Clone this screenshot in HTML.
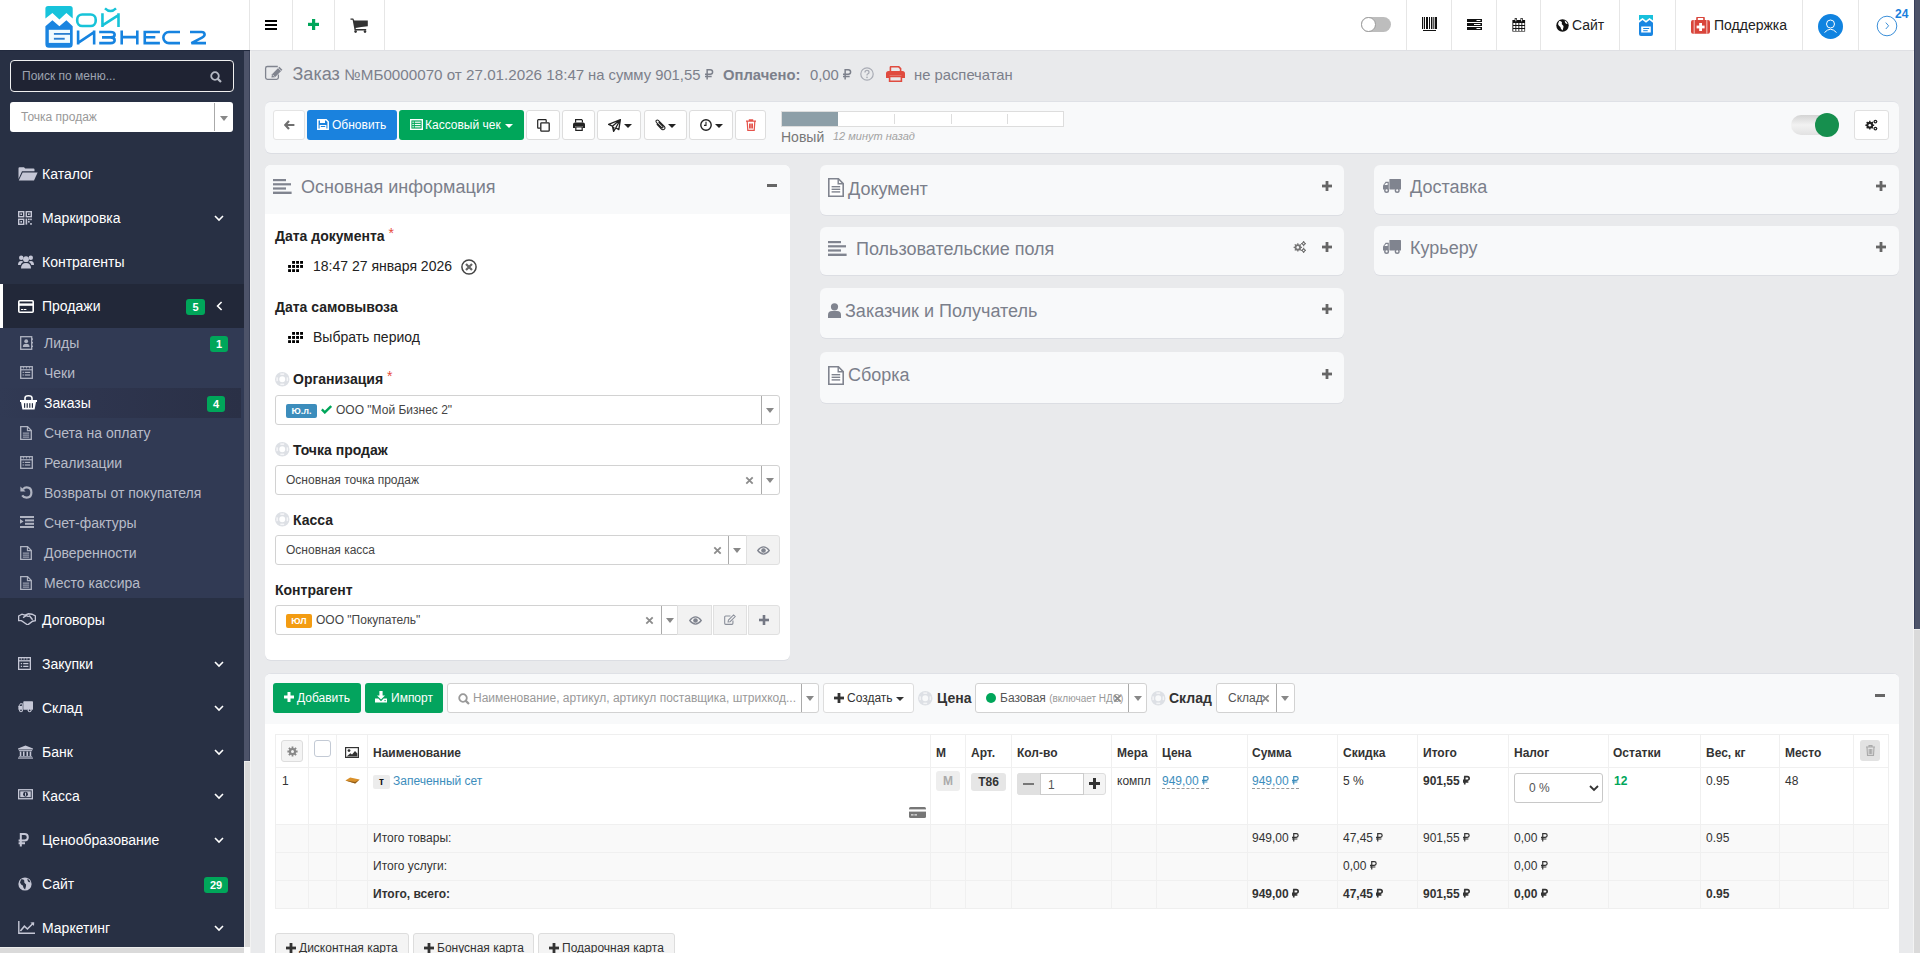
<!DOCTYPE html>
<html><head><meta charset="utf-8">
<style>
*{box-sizing:border-box}
html,body{margin:0;padding:0}
body{width:1920px;height:953px;overflow:hidden;position:relative;background:#e9eaec;font-family:"Liberation Sans",sans-serif;font-size:12px;color:#333}
.abs{position:absolute}
svg{display:block}
.rub{display:inline-block;width:0.6em;height:0.716em;vertical-align:baseline;overflow:visible}.rub path{fill:none;stroke:currentColor;stroke-width:100}.rub.rb path{stroke-width:140}
/* header */
#hdr{position:absolute;left:0;top:0;width:1914px;height:51px;background:#fff;border-bottom:1px solid #dfe0e4}
.vd{position:absolute;top:0;width:1px;height:50px;background:#e6e6e6}
/* sidebar */
#sb{position:absolute;left:0;top:50px;width:244px;height:897px;background:#283044;overflow:hidden}
.mi{position:absolute;left:0;width:244px;height:44px;color:#fff;font-size:14px}
.mi .t{position:absolute;left:42px;top:14px;line-height:16px}
.mi .ic{position:absolute;left:17px;top:14px}
.chev{position:absolute;left:214px;top:19px}
.badge{position:absolute;background:#00a65a;color:#fff;font-weight:bold;font-size:11px;text-align:center;border-radius:3px;line-height:16px;height:16px}
.si{position:absolute;left:0;width:244px;height:30px;color:#b8bcc8;font-size:14px}
.si .t{position:absolute;left:44px;top:7px;line-height:16px}
.si .ic{position:absolute;left:20px;top:8px}
/* scrollbars */
.sbar{position:absolute;background:#dadada}
.thumb{position:absolute;background:#4d5369}
/* content */
.panel{position:absolute;background:#f8f9fa;border-radius:6px;box-shadow:0 1px 0 #dcdee3}
.ph{font-size:18px;color:#7b7f8b}
.btn{position:absolute;border:1px solid #ddd;background:#fff;border-radius:3px}
.lbl{position:absolute;font-size:14px;font-weight:bold;color:#222}
.sel{position:absolute;height:30px;border:1px solid #d2d2d2;border-radius:3px;background:#fff}
.sel .t{position:absolute;left:10px;top:8px;font-size:12px;line-height:14px;color:#444;white-space:nowrap}
.caret{position:absolute;width:0;height:0;border-left:4px solid transparent;border-right:4px solid transparent;border-top:5px solid #888}
</style></head><body>

<!-- HEADER -->
<div id="hdr">
 <svg class="abs" style="left:44px;top:4px" width="165" height="46" viewBox="44 4 165 46">
  <path d="M45.4 8.6 Q45.4 5.9 48.1 5.9 L70 5.9 Q72.7 5.9 72.7 8.6 L72.7 18.5 L66.4 12.9 L59.4 19.5 L52.4 12.9 L45.4 18.5 Z" fill="#17c3db"/>
  <path d="M45.4 26.2 L52.4 20.2 L59.4 26.2 L66.4 20.2 L72.7 26.2 L72.7 44.2 Q72.7 47.7 69.2 47.7 L48.9 47.7 Q45.4 47.7 45.4 44.2 Z" fill="#1a84e0"/>
  <rect x="48.8" y="29.8" width="21.2" height="13.1" fill="#effbff"/>
  <rect x="53.9" y="33" width="16.1" height="1.8" fill="#2a7fd0"/>
  <rect x="53.9" y="37.8" width="10.8" height="1.9" fill="#2a7fd0"/>
  <g fill="none" stroke="#17c3d8" stroke-width="2.6" stroke-linejoin="miter">
   <rect x="77.2" y="14.5" width="18.5" height="11.5" rx="5"/>
   <path d="M102.45 13.2 V27.1 M118.5 13.2 V27.1 M102.45 25.4 L118.5 15.2"/>
  </g>
  <path d="M105 8.4 Q110.5 13.8 116 8.4" fill="none" stroke="#17c3d8" stroke-width="2.4"/>
  <g fill="none" stroke="#1683e0" stroke-width="2.6" stroke-linejoin="miter">
   <path d="M78.1 30.5 V44.6 M94.15 30.5 V44.6 M78.1 42.8 L94.15 32.2"/>
   <path d="M99.2 31.95 H110.5 Q114.65 31.95 114.65 34.7 Q114.65 37.4 110.5 37.4 H102 M110.5 37.4 Q114.65 37.4 114.65 40.3 Q114.65 43.15 110.5 43.15 H99.2"/>
   <path d="M121.7 30.5 V44.6 M137.3 30.5 V44.6 M121.7 37.15 H137.3"/>
   <path d="M159.9 31.95 H144.75 V43.15 H159.9 M144.75 37.3 H155.3"/>
   <path d="M180 31.95 H169 A5.6 5.6 0 0 0 163.35 37.55 A5.6 5.6 0 0 0 169 43.15 H180"/>
   <path d="M190 31.95 H201.5 Q204.6 31.95 204.6 34.5 Q204.6 36.3 202 37.6 L191.4 43.15 H206"/>
  </g>
 </svg>
 <div class="vd" style="left:249px"></div>
 <div class="vd" style="left:292px"></div>
 <div class="vd" style="left:334px"></div>
 <div class="vd" style="left:384px"></div>
 <svg class="abs" style="left:265px;top:20px" width="12" height="10"><rect x="0" y="0" width="12" height="2" fill="#000"/><rect x="0" y="4" width="12" height="2" fill="#000"/><rect x="0" y="8" width="12" height="2" fill="#000"/></svg>
 <svg class="abs" style="left:308px;top:19px" width="11" height="11"><rect x="4" y="0" width="3.2" height="11" fill="#00a65a"/><rect x="0" y="3.8" width="11" height="3.2" fill="#00a65a"/></svg>
 <svg class="abs" style="left:350px;top:18px" width="18" height="15" viewBox="0 0 18 15"><path d="M0.5 0.6 L3.2 0.6 L4.3 2.4 L17.8 2.4 L17.8 8.2 Q11 8.6 5.6 10 L5.9 11 L16.2 11 L16.2 12.4 L4.6 12.4 L2.6 1.8 L0.5 1.8 Z" fill="#333"/><circle cx="5.6" cy="13.6" r="1.3" fill="#333"/><circle cx="15" cy="13.6" r="1.3" fill="#333"/></svg>

 <!-- right -->
 <div class="abs" style="left:1361px;top:17px;width:30px;height:15px;border-radius:8px;background:#bdbdbd"></div>
 <div class="abs" style="left:1361px;top:17px;width:15px;height:15px;border-radius:50%;background:#fff;border:1px solid #9a9a9a"></div>
 <div class="vd" style="left:1406px"></div>
 <svg class="abs" style="left:1422px;top:17px" width="15" height="14" viewBox="0 0 15 14"><g fill="#111"><rect x="0" y="0" width="1.2" height="12"/><rect x="2" y="0" width="1" height="12"/><rect x="4" y="0" width="2" height="12"/><rect x="7" y="0" width="1" height="12"/><rect x="9" y="0" width="1.4" height="12"/><rect x="11.3" y="0" width="1" height="12"/><rect x="13" y="0" width="2" height="12"/><rect x="1" y="13" width="13" height="1"/></g></svg>
 <div class="vd" style="left:1451px"></div>
 <svg class="abs" style="left:1467px;top:19px" width="15" height="11" viewBox="0 0 15 11"><g fill="#111"><rect x="0" y="0" width="15" height="3"/><rect x="0" y="4" width="15" height="3"/><rect x="0" y="8" width="15" height="3"/></g><g fill="#fff"><rect x="9.5" y="1" width="4" height="1"/><rect x="7" y="5" width="6.5" height="1"/><rect x="9.5" y="9" width="4" height="1"/></g></svg>
 <div class="vd" style="left:1496px"></div>
 <svg class="abs" style="left:1512px;top:17px" width="14" height="15" viewBox="0 0 14 15"><rect x="0.4" y="3" width="12.7" height="11.55" fill="#111"/><g fill="#fff"><rect x="1.3" y="6" width="2.1" height="2"/><rect x="4.3" y="6" width="2.1" height="2"/><rect x="7.3" y="6" width="2.1" height="2"/><rect x="10.3" y="6" width="2.1" height="2"/><rect x="1.3" y="9" width="2.1" height="2"/><rect x="4.3" y="9" width="2.1" height="2"/><rect x="7.3" y="9" width="2.1" height="2"/><rect x="10.3" y="9" width="2.1" height="2"/><rect x="1.3" y="12" width="2.1" height="2"/><rect x="4.3" y="12" width="2.1" height="2"/><rect x="7.3" y="12" width="2.1" height="2"/><rect x="10.3" y="12" width="2.1" height="2"/></g><rect x="2.7" y="0.9" width="2.3" height="4.1" rx="0.6" fill="#111"/><rect x="8.5" y="0.9" width="2.3" height="4.1" rx="0.6" fill="#111"/><rect x="3.4" y="1.7" width="0.9" height="2.6" fill="#fff"/><rect x="9.2" y="1.7" width="0.9" height="2.6" fill="#fff"/></svg>
 <div class="vd" style="left:1540px"></div>
 <svg class="abs" style="left:1556px;top:19px" width="13" height="13" viewBox="0 0 13 13"><circle cx="6.5" cy="6.5" r="6.2" fill="#111"/><path d="M3 2.2 Q5 1.8 6 3.5 Q5.2 5 6.6 6 Q8 6.5 7.4 8.6 L6.6 11.6 Q4.6 10 4.4 8 Q2.6 7 2 5 Z M8.6 1.6 Q10.8 2.6 11.6 4.8 Q10 5.2 9.2 3.8 Z" fill="#fff"/></svg>
 <div class="abs" style="left:1572px;top:17px;font-size:14px;line-height:16px;color:#222">Сайт</div>
 <div class="vd" style="left:1619px"></div>
 <svg class="abs" style="left:1639px;top:15px" width="14" height="21" viewBox="0 0 14 21"><path d="M0 0 H14 V5.5 L10.5 3 L7 5.8 L3.5 3 L0 5.5 Z" fill="#17c0dc"/><path d="M0 7.8 L3.5 5 L7 7.8 L10.5 5 L14 7.8 V19 Q14 21 12 21 H2 Q0 21 0 19 Z" fill="#1a86e2"/><rect x="2.2" y="11.5" width="9.6" height="6" fill="#fff"/><rect x="4.2" y="13" width="6" height="1" fill="#1a86e2"/><rect x="4.2" y="15.2" width="4.5" height="1" fill="#1a86e2"/></svg>
 <div class="vd" style="left:1675px"></div>
 <svg class="abs" style="left:1691px;top:17px" width="19" height="17" viewBox="0 0 19 17"><path d="M6 3 V1.2 Q6 0.3 7 0.3 H12 Q13 0.3 13 1.2 V3" fill="none" stroke="#d9453b" stroke-width="1.6"/><rect x="0" y="3" width="19" height="13.7" rx="2" fill="#d9453b"/><rect x="2.6" y="3" width="1.2" height="13.7" fill="#fff" opacity=".6"/><rect x="15.2" y="3" width="1.2" height="13.7" fill="#fff" opacity=".6"/><rect x="8.2" y="6" width="2.8" height="8" fill="#fff"/><rect x="5.6" y="8.6" width="8" height="2.8" fill="#fff"/></svg>
 <div class="abs" style="left:1714px;top:17px;font-size:14px;line-height:16px;color:#222">Поддержка</div>
 <div class="vd" style="left:1802px"></div>
 <svg class="abs" style="left:1818px;top:14px" width="25" height="25" viewBox="0 0 25 25"><circle cx="12.5" cy="12.5" r="12.5" fill="#1083e0"/><circle cx="12.5" cy="10" r="4" fill="none" stroke="#fff" stroke-width="1"/><path d="M6.5 18.5 Q12.5 12 18.5 18.5" fill="none" stroke="#fff" stroke-width="1"/></svg>
 <div class="vd" style="left:1858px"></div>
 <svg class="abs" style="left:1876px;top:15px" width="23" height="23" viewBox="0 0 23 23"><circle cx="11" cy="11" r="9.8" fill="none" stroke="#3b8fd9" stroke-width="1"/><path d="M9.8 7.6 L12.6 10.8 L9.8 14" fill="none" stroke="#3b8fd9" stroke-width="1"/></svg>
 <div class="abs" style="left:1895px;top:7px;font-size:12px;font-weight:bold;color:#1a7fdc;line-height:14px">24</div>
</div>

<!-- SIDEBAR -->
<div id="sb">
<div class="abs" style="left:10px;top:10px;width:224px;height:32px;background:#1f2333;border:1.5px solid #f0f0f0;border-radius:4px"><div class="abs" style="left:11px;top:8px;font-size:12px;line-height:14px;color:#9ea3b0">Поиск по меню...</div><svg class="abs" style="left:199px;top:10px" width="12" height="12" viewBox="0 0 12 12"><circle cx="5" cy="5" r="3.8" fill="none" stroke="#b5b9c4" stroke-width="1.8"/><path d="M7.6 7.6 L11 11" stroke="#b5b9c4" stroke-width="2.2"/></svg></div>
<div class="abs" style="left:10px;top:52px;width:223px;height:30px;background:#fff;border-radius:3px"><div class="abs" style="left:11px;top:8px;font-size:12px;line-height:14px;color:#999">Точка продаж</div><div class="abs" style="left:204px;top:1px;width:1px;height:28px;background:#aaa"></div><div class="caret" style="left:210px;top:14px;border-top-color:#888;border-left-width:4px;border-right-width:4px;border-top-width:5px"></div></div>
<div class="mi" style="top:102px"><div class="ic" style="left:18px;top:15px"><svg width="20" height="14" viewBox="0 0 20 14"><path d="M0.5 1.2 Q0.5 0.2 1.5 0.2 L6 0.2 L7.2 1.4 L15.5 1.4 Q16.5 1.4 16.5 2.4 L16.5 4.2 L4 4.2 L0.5 12 Z" fill="#c5c7d6"/><path d="M4.6 5.4 L19.6 5.4 L16 13.6 L0.8 13.6 Z" fill="#c5c7d6"/></svg></div><div class="t">Каталог</div></div>
<div class="mi" style="top:146px"><div class="ic" style="left:18px;top:15px"><svg width="14" height="14" viewBox="0 0 14 14"><g fill="none" stroke="#c5c7d6" stroke-width="1.4"><rect x="0.7" y="0.7" width="5" height="5"/><rect x="8.3" y="0.7" width="5" height="5"/><rect x="0.7" y="8.3" width="5" height="5"/></g><g fill="#c5c7d6"><rect x="2.4" y="2.4" width="1.6" height="1.6"/><rect x="10" y="2.4" width="1.6" height="1.6"/><rect x="2.4" y="10" width="1.6" height="1.6"/><rect x="7.6" y="7.6" width="1.6" height="6"/><rect x="10" y="7.6" width="1.6" height="1.6"/><rect x="12.2" y="7.6" width="1.6" height="1.6"/><rect x="10" y="10" width="1.6" height="1.6"/><rect x="12.2" y="12" width="1.6" height="1.8"/></g></svg></div><div class="t">Маркировка</div><svg class="chev" width="10" height="7" viewBox="0 0 10 7"><path d="M1 1 L5 5 L9 1" fill="none" stroke="#fff" stroke-width="1.6"/></svg></div>
<div class="mi" style="top:190px"><div class="ic" style="left:18px;top:15px"><svg width="16" height="14" viewBox="0 0 16 14"><g fill="#c5c7d6"><circle cx="8" cy="4.2" r="2.9"/><path d="M3 13.6 Q3 8 8 8 Q13 8 13 13.6 Z"/><circle cx="3.2" cy="2.8" r="2.2"/><circle cx="12.8" cy="2.8" r="2.2"/><path d="M0 10 Q0 6 3.2 6 Q4.6 6 5.4 6.8 Q3 8.4 2.6 10 Z"/><path d="M16 10 Q16 6 12.8 6 Q11.4 6 10.6 6.8 Q13 8.4 13.4 10 Z"/></g></svg></div><div class="t">Контрагенты</div></div>
<div class="mi" style="top:234px;background:#222839"><div class="ic" style="left:18px;top:16px"><svg width="16" height="13" viewBox="0 0 16 13"><rect x="0.8" y="0.8" width="14.4" height="11.4" rx="1" fill="none" stroke="#fff" stroke-width="1.6"/><rect x="0.8" y="3.4" width="14.4" height="2.4" fill="#fff"/><rect x="3" y="9" width="2.4" height="1" fill="#fff"/><rect x="6" y="9" width="2.4" height="1" fill="#fff"/></svg></div><div class="t">Продажи</div><div class="badge" style="left:186px;top:15px;width:19px">5</div><svg class="abs" style="left:216px;top:17px" width="7" height="10" viewBox="0 0 7 10"><path d="M5.6 1 L1.6 5 L5.6 9" fill="none" stroke="#fff" stroke-width="1.6"/></svg><div class="abs" style="left:0;top:0;width:3px;height:44px;background:#fff"></div></div>
<div class="abs" style="left:0;top:278px;width:244px;height:270px;background:#313a54"></div>
<div class="si" style="top:278px"><div class="ic" style="top:8px"><svg width="13" height="14" viewBox="0 0 13 14"><rect x="0.7" y="0.7" width="11" height="12.6" fill="none" stroke="#b0b4c2" stroke-width="1.3"/><circle cx="6.2" cy="5.2" r="1.9" fill="#b0b4c2"/><path d="M2.8 11 Q2.8 7.8 6.2 7.8 Q9.6 7.8 9.6 11 Z" fill="#b0b4c2"/><rect x="11.6" y="2.4" width="1.4" height="1.4" fill="#b0b4c2"/><rect x="11.6" y="6" width="1.4" height="1.4" fill="#b0b4c2"/><rect x="11.6" y="9.6" width="1.4" height="1.4" fill="#b0b4c2"/></svg></div><div class="t">Лиды</div><div class="badge" style="left:210px;top:8px;width:18px">1</div></div>
<div class="si" style="top:308px"><div class="ic" style="top:8px"><svg width="13" height="13" viewBox="0 0 13 13"><rect x="0.7" y="0.7" width="11.6" height="11.6" fill="none" stroke="#b0b4c2" stroke-width="1.3"/><g fill="#b0b4c2"><rect x="0" y="3.2" width="13" height="1.2"/><rect x="2.6" y="5.8" width="1.2" height="1.2"/><rect x="4.8" y="5.8" width="5.4" height="1.2"/><rect x="2.6" y="8.4" width="1.2" height="1.2"/><rect x="4.8" y="8.4" width="5.4" height="1.2"/><rect x="3" y="1.2" width="1" height="1.2"/><rect x="6" y="1.2" width="1" height="1.2"/><rect x="9" y="1.2" width="1" height="1.2"/></g></svg></div><div class="t">Чеки</div></div>
<div class="si" style="top:338px;background:linear-gradient(90deg,#313a54 0%,#2e354e 40%,#2a3046 100%);width:241px"><div class="ic" style="top:7px"><svg width="17" height="15" viewBox="0 0 17 15"><path d="M5 5.6 L5 3 Q5 0.8 8.5 0.8 Q12 0.8 12 3 L12 5.6" fill="none" stroke="#fff" stroke-width="1.6"/><path d="M0 5 H17 V7 H16 L14.6 14.4 H2.4 L1 7 H0 Z" fill="#fff"/><g fill="#283044"><rect x="4" y="8.2" width="1.2" height="4.6"/><rect x="6.6" y="8.2" width="1.2" height="4.6"/><rect x="9.2" y="8.2" width="1.2" height="4.6"/><rect x="11.8" y="8.2" width="1.2" height="4.6"/></g></svg></div><div class="t" style="color:#fff">Заказы</div><div class="badge" style="left:207px;top:8px;width:18px">4</div></div>
<div class="si" style="top:368px"><div class="ic" style="top:8px"><svg width="12" height="14" viewBox="0 0 12 14"><path d="M0.7 0.7 H7.6 L11.3 4.4 V13.3 H0.7 Z" fill="none" stroke="#b0b4c2" stroke-width="1.3"/><path d="M7.4 0.8 V4.6 H11.2" fill="none" stroke="#b0b4c2" stroke-width="1.1"/><g fill="#b0b4c2"><rect x="2.8" y="6.6" width="6.4" height="1"/><rect x="2.8" y="8.6" width="6.4" height="1"/><rect x="2.8" y="10.6" width="6.4" height="1"/></g></svg></div><div class="t">Счета на оплату</div></div>
<div class="si" style="top:398px"><div class="ic" style="top:8px"><svg width="13" height="13" viewBox="0 0 13 13"><rect x="0.7" y="0.7" width="11.6" height="11.6" fill="none" stroke="#b0b4c2" stroke-width="1.3"/><g fill="#b0b4c2"><rect x="0" y="3.2" width="13" height="1.2"/><rect x="2.6" y="5.8" width="1.2" height="1.2"/><rect x="4.8" y="5.8" width="5.4" height="1.2"/><rect x="2.6" y="8.4" width="1.2" height="1.2"/><rect x="4.8" y="8.4" width="5.4" height="1.2"/><rect x="3" y="1.2" width="1" height="1.2"/><rect x="6" y="1.2" width="1" height="1.2"/><rect x="9" y="1.2" width="1" height="1.2"/></g></svg></div><div class="t">Реализации</div></div>
<div class="si" style="top:428px"><div class="ic" style="top:8px"><svg width="13" height="13" viewBox="0 0 13 13"><path d="M3 3.2 Q4.6 1.4 6.6 1.4 Q11.4 1.4 11.4 6.5 Q11.4 11.6 6.6 11.6 Q3.6 11.6 2.2 9.4" fill="none" stroke="#b0b4c2" stroke-width="2.2"/><path d="M0.4 0.6 L5.6 5.6 L0.4 5.6 Z" fill="#b0b4c2"/></svg></div><div class="t">Возвраты от покупателя</div></div>
<div class="si" style="top:458px"><div class="ic" style="top:8px"><svg width="14" height="12" viewBox="0 0 14 12"><g fill="#b0b4c2"><rect x="0" y="0" width="14" height="2"/><rect x="5" y="3.4" width="9" height="2"/><rect x="5" y="6.8" width="9" height="2"/><rect x="0" y="10" width="14" height="2"/><path d="M0 3 L3.6 5.4 L0 7.8 Z"/></g></svg></div><div class="t">Счет-фактуры</div></div>
<div class="si" style="top:488px"><div class="ic" style="top:8px"><svg width="12" height="14" viewBox="0 0 12 14"><path d="M0.7 0.7 H7.6 L11.3 4.4 V13.3 H0.7 Z" fill="none" stroke="#b0b4c2" stroke-width="1.3"/><path d="M7.4 0.8 V4.6 H11.2" fill="none" stroke="#b0b4c2" stroke-width="1.1"/><g fill="#b0b4c2"><rect x="2.8" y="6.6" width="6.4" height="1"/><rect x="2.8" y="8.6" width="6.4" height="1"/><rect x="2.8" y="10.6" width="6.4" height="1"/></g></svg></div><div class="t">Доверенности</div></div>
<div class="si" style="top:518px"><div class="ic" style="top:8px"><svg width="12" height="14" viewBox="0 0 12 14"><path d="M0.7 0.7 H7.6 L11.3 4.4 V13.3 H0.7 Z" fill="none" stroke="#b0b4c2" stroke-width="1.3"/><path d="M7.4 0.8 V4.6 H11.2" fill="none" stroke="#b0b4c2" stroke-width="1.1"/><g fill="#b0b4c2"><rect x="2.8" y="6.6" width="6.4" height="1"/><rect x="2.8" y="8.6" width="6.4" height="1"/><rect x="2.8" y="10.6" width="6.4" height="1"/></g></svg></div><div class="t">Место кассира</div></div>
<div class="mi" style="top:548px"><div class="ic" style="left:18px;top:15px"><svg width="18" height="12" viewBox="0 0 18 12"><path d="M0.6 3 L4 1.2 L7 2.2 L10.4 0.8 L14 1.2 L17.4 3 L17.4 7.6 L14.6 8.2 L10.4 11.4 Q9.2 12 8.2 11 L3.4 7.6 L0.6 7.6 Z M5 4.6 L8.6 2.4 Q9.8 4 11.6 3 L14.6 6.8" fill="none" stroke="#c5c7d6" stroke-width="1.4"/></svg></div><div class="t">Договоры</div></div>
<div class="mi" style="top:592px"><div class="ic" style="left:18px;top:15px"><svg width="13" height="13" viewBox="0 0 14 14"><rect x="0.7" y="0.7" width="12.6" height="12.6" fill="none" stroke="#c5c7d6" stroke-width="1.4"/><g fill="#c5c7d6"><rect x="0" y="3.4" width="14" height="1.4"/><rect x="3" y="6.4" width="1.4" height="1.4"/><rect x="5.6" y="6.4" width="5.6" height="1.4"/><rect x="3" y="9.4" width="1.4" height="1.4"/><rect x="5.6" y="9.4" width="5.6" height="1.4"/><rect x="3" y="1.4" width="1.2" height="1.4"/><rect x="6" y="1.4" width="1.2" height="1.4"/><rect x="9" y="1.4" width="1.2" height="1.4"/></g></svg></div><div class="t">Закупки</div><svg class="chev" width="10" height="7" viewBox="0 0 10 7"><path d="M1 1 L5 5 L9 1" fill="none" stroke="#fff" stroke-width="1.6"/></svg></div>
<div class="mi" style="top:636px"><div class="ic" style="left:18px;top:15px"><svg width="15" height="11.5" viewBox="0 0 17 13"><g fill="#c5c7d6"><rect x="6" y="0.4" width="11" height="9.6" rx="0.8"/><path d="M0.4 6 L2.6 2.6 L5.4 2.6 L5.4 10 L0.4 10 Z"/><circle cx="3.4" cy="10.6" r="2.2"/><circle cx="13.2" cy="10.6" r="2.2"/></g><circle cx="3.4" cy="10.6" r="1" fill="#283044"/><circle cx="13.2" cy="10.6" r="1" fill="#283044"/><path d="M1.6 5.6 L3 3.6 L4.4 3.6 L4.4 5.6 Z" fill="#283044"/></svg></div><div class="t">Склад</div><svg class="chev" width="10" height="7" viewBox="0 0 10 7"><path d="M1 1 L5 5 L9 1" fill="none" stroke="#fff" stroke-width="1.6"/></svg></div>
<div class="mi" style="top:680px"><div class="ic" style="left:18px;top:15px"><svg width="15" height="14" viewBox="0 0 17 15"><g fill="#c5c7d6"><path d="M8.5 0 L17 3.4 L17 4.6 L0 4.6 L0 3.4 Z"/><rect x="1" y="5.4" width="15" height="1.2"/><rect x="2" y="7" width="1.8" height="5"/><rect x="5.6" y="7" width="1.8" height="5"/><rect x="9.6" y="7" width="1.8" height="5"/><rect x="13.2" y="7" width="1.8" height="5"/><rect x="1" y="12.4" width="15" height="1"/><rect x="0" y="13.8" width="17" height="1.2"/></g></svg></div><div class="t">Банк</div><svg class="chev" width="10" height="7" viewBox="0 0 10 7"><path d="M1 1 L5 5 L9 1" fill="none" stroke="#fff" stroke-width="1.6"/></svg></div>
<div class="mi" style="top:724px"><div class="ic" style="left:18px;top:15px"><svg width="15" height="10.5" viewBox="0 0 16 11"><rect x="0.7" y="0.7" width="14.6" height="9.6" fill="none" stroke="#c5c7d6" stroke-width="1.4"/><rect x="2.4" y="2.4" width="11.2" height="6.2" fill="#c5c7d6"/><circle cx="8" cy="5.5" r="2.6" fill="#283044"/><rect x="7.5" y="3.8" width="1.1" height="3.4" fill="#c5c7d6"/></svg></div><div class="t">Касса</div><svg class="chev" width="10" height="7" viewBox="0 0 10 7"><path d="M1 1 L5 5 L9 1" fill="none" stroke="#fff" stroke-width="1.6"/></svg></div>
<div class="mi" style="top:768px"><div class="ic" style="left:18px;top:15px"><svg width="11" height="14" viewBox="0 0 11 14"><path d="M2.8 13.6 L2.8 1 L6.4 1 Q9.8 1 9.8 4.2 Q9.8 7.4 6.4 7.4 L0.6 7.4 M0.6 10.2 L7 10.2" fill="none" stroke="#c5c7d6" stroke-width="2"/></svg></div><div class="t">Ценообразование</div><svg class="chev" width="10" height="7" viewBox="0 0 10 7"><path d="M1 1 L5 5 L9 1" fill="none" stroke="#fff" stroke-width="1.6"/></svg></div>
<div class="mi" style="top:812px"><div class="ic" style="left:18px;top:15px"><svg width="14" height="14" viewBox="0 0 14 14"><circle cx="7" cy="7" r="6.6" fill="#c5c7d6"/><path d="M3 2.4 Q5.4 2 6.4 3.8 Q5.6 5.4 7.1 6.4 Q8.6 7 8 9.2 L7.1 12.6 Q5 10.8 4.8 8.6 Q2.8 7.6 2 5.4 Z M9.2 1.6 Q11.6 2.8 12.5 5.2 Q10.8 5.6 9.9 4.2 Z" fill="#283044"/></svg></div><div class="t">Сайт</div><div class="badge" style="left:204px;top:15px;width:24px">29</div></div>
<div class="mi" style="top:856px"><div class="ic" style="left:18px;top:15px"><svg width="17" height="13" viewBox="0 0 17 13"><path d="M0.8 0 L0.8 12.2 L17 12.2" fill="none" stroke="#c5c7d6" stroke-width="1.4"/><path d="M2.4 10 L6.4 5.2 L9.4 8 L15.4 2" fill="none" stroke="#c5c7d6" stroke-width="1.6"/><path d="M12.4 1.4 L16.2 1.2 L16 5 Z" fill="#c5c7d6"/></svg></div><div class="t">Маркетинг</div><svg class="chev" width="10" height="7" viewBox="0 0 10 7"><path d="M1 1 L5 5 L9 1" fill="none" stroke="#fff" stroke-width="1.6"/></svg></div>
</div>
<div class="abs" style="left:0;top:50px;width:250px;height:1px;background:#222a3e"></div>
<div class="sbar" style="left:244px;top:761px;width:6px;height:186px;border-left:1px solid #ececec;border-top:1px solid #ececec"></div>
<div class="thumb" style="left:244px;top:51px;width:6px;height:710px;border-right:1px solid #3a4158"></div>
<div class="sbar" style="left:0;top:947px;width:244px;height:6px;border-top:1px solid #ececec"></div><div class="abs" style="left:244px;top:947px;width:6px;height:6px;background:#fff"></div>
<div class="abs" style="left:250px;top:51px;width:1px;height:902px;background:#f3f3f3"></div>
<div class="abs" style="left:1913px;top:51px;width:1px;height:902px;background:#f3f3f3"></div>
<div class="sbar" style="left:1914px;top:629px;width:6px;height:324px;border-top:1px solid #ececec"></div>
<div class="thumb" style="left:1914px;top:0;width:6px;height:629px;border-left:1px solid #383f5a"></div>


<!-- TITLE -->
<svg class="abs" style="left:264px;top:65px" width="20" height="16" viewBox="0 0 20 16"><path d="M13.8 1.5 H3.4 Q1.6 1.5 1.6 3.3 V12.5 Q1.6 14.3 3.4 14.3 H12.6 Q14.4 14.3 14.4 12.5 V9.6" fill="none" stroke="#80848f" stroke-width="1.3"/><path d="M7.4 12.6 L8 9.2 L15.4 1.8 L18.4 4.8 L11 12.2 Z" fill="#80848f"/><path d="M14.2 3 L17.2 6" stroke="#e9eaec" stroke-width="0.7"/><path d="M8.6 9.8 L10.4 11.6" stroke="#e9eaec" stroke-width="0.8"/></svg>
<div class="abs" style="left:292.5px;top:64px;font-size:18px;line-height:20px;color:#7c808b;white-space:nowrap">Заказ</div><div class="abs" style="left:344.5px;top:66px;font-size:15.2px;line-height:17px;color:#7c808b;white-space:nowrap">№МБ0000070 от 27.01.2026 18:47</div>
<div class="abs" style="left:588px;top:67px;font-size:14.8px;line-height:17px;color:#7c808b;white-space:nowrap">на сумму 901,55 <svg class="rub" viewBox="0 0 600 716"><path d="M145 716 V45 M95 45 H357 A157.5 157.5 0 0 1 357 360 H0 M0 500 H450"/></svg></div>
<div class="abs" style="left:723px;top:67px;font-size:14.8px;line-height:17px;color:#7c808b;font-weight:bold;white-space:nowrap">Оплачено:</div>
<div class="abs" style="left:810px;top:67px;font-size:14.8px;line-height:17px;color:#7c808b;white-space:nowrap">0,00 <svg class="rub" viewBox="0 0 600 716"><path d="M145 716 V45 M95 45 H357 A157.5 157.5 0 0 1 357 360 H0 M0 500 H450"/></svg></div>
<svg class="abs" style="left:860px;top:67px" width="14" height="14" viewBox="0 0 14 14"><circle cx="7" cy="7" r="6.2" fill="none" stroke="#a9acb5" stroke-width="1.2"/><path d="M5 5.4 Q5 3.4 7 3.4 Q9 3.4 9 5.2 Q9 6.4 7.6 7 Q7 7.3 7 8.4" fill="none" stroke="#a9acb5" stroke-width="1.3"/><circle cx="7" cy="10.4" r="0.8" fill="#a9acb5"/></svg>
<svg class="abs" style="left:886px;top:66px" width="19" height="16" viewBox="0 0 19 16"><path d="M4.4 5 V1.6 Q4.4 0.6 5.4 0.6 H12.6 L14.6 2.6 V5" fill="none" stroke="#e04b3f" stroke-width="1.6"/><path d="M0 7.6 Q0 5 2.6 5 H16.4 Q19 5 19 7.6 V12 H15.4 V9.6 H3.6 V12 H0 Z" fill="#e04b3f"/><path d="M3.6 10.4 H15.4 V15.4 H3.6 Z" fill="none" stroke="#e04b3f" stroke-width="1.6"/></svg>
<div class="abs" style="left:914px;top:67px;font-size:14.8px;line-height:17px;color:#7c808b;white-space:nowrap">не распечатан</div>

<!-- TOOLBAR PANEL -->
<div class="panel" style="left:265px;top:101px;width:1634px;height:52px;border-top:1px solid #dfe1e6"></div>
<div class="btn" style="left:273px;top:110px;width:32px;height:30px;border-color:#e4e4e4"><svg class="abs" style="left:10px;top:9px" width="11" height="10" viewBox="0 0 11 10"><path d="M5 1 L1.2 5 L5 9 M1.6 5 H10.4" fill="none" stroke="#6f6f6f" stroke-width="2.2"/></svg></div>
<div class="abs" style="left:307px;top:110px;width:90px;height:30px;background:#1a82de;border-radius:3px;color:#fff;font-size:12px"><svg class="abs" style="left:10px;top:9px" width="12" height="11" viewBox="0 0 12 11"><path d="M0.8 0.8 H9.2 L11.2 2.8 V10.2 H0.8 Z" fill="none" stroke="#fff" stroke-width="1.5"/><rect x="3" y="1" width="5" height="3" fill="#fff"/><rect x="2.6" y="6" width="6.8" height="4" fill="#fff"/><rect x="3.8" y="7" width="4.4" height="1" fill="#1a82de"/></svg><div class="abs" style="left:25px;top:8px;line-height:14px">Обновить</div></div>
<div class="abs" style="left:399px;top:110px;width:125px;height:30px;background:#00a65a;border-radius:3px;color:#fff;font-size:12px"><svg class="abs" style="left:11px;top:9px" width="13" height="11" viewBox="0 0 13 11"><rect x="0.7" y="0.7" width="11.6" height="9.6" fill="none" stroke="#fff" stroke-width="1.4"/><g fill="#fff"><rect x="2.4" y="2.6" width="1.4" height="1.2"/><rect x="4.8" y="2.6" width="5.8" height="1.2"/><rect x="2.4" y="4.9" width="1.4" height="1.2"/><rect x="4.8" y="4.9" width="5.8" height="1.2"/><rect x="2.4" y="7.2" width="1.4" height="1.2"/><rect x="4.8" y="7.2" width="5.8" height="1.2"/></g></svg><div class="abs" style="left:26px;top:8px;line-height:14px">Кассовый чек</div><div class="caret" style="left:106px;top:14px;border-top-color:#fff;border-left-width:4px;border-right-width:4px;border-top-width:4px"></div></div>
<div class="btn" style="left:526px;top:110px;width:34px;height:30px"><svg class="abs" style="left:10px;top:8px" width="13" height="13" viewBox="0 0 13 13"><path d="M3.2 9.2 H1.4 Q0.7 9.2 0.7 8.5 V1.4 Q0.7 0.7 1.4 0.7 H8.5 Q9.2 0.7 9.2 1.4 V3.2" fill="none" stroke="#222" stroke-width="1.2"/><rect x="3.8" y="3.8" width="8.4" height="8.4" rx="0.8" fill="none" stroke="#222" stroke-width="1.3"/></svg></div>
<div class="btn" style="left:562px;top:110px;width:33px;height:30px"><svg class="abs" style="left:10px;top:8px" width="12" height="12" viewBox="0 0 12 12"><path d="M2.6 3.6 V0.6 H8.6 L9.4 1.4 V3.6" fill="none" stroke="#222" stroke-width="1.2"/><path d="M0 5.6 Q0 3.6 2 3.6 H10 Q12 3.6 12 5.6 V9 H9.8 V7 H2.2 V9 H0 Z" fill="#222"/><path d="M2.8 7.8 H9.2 V11.4 H2.8 Z" fill="none" stroke="#222" stroke-width="1.2"/></svg></div>
<div class="btn" style="left:597px;top:110px;width:44px;height:30px"><svg class="abs" style="left:10px;top:8px" width="13" height="13" viewBox="0 0 13 13"><path d="M12.4 0.6 L0.6 5.4 L4.4 7.2 L5.6 12.4 L7.8 8.8 L10.8 10.6 Z M4.4 7.2 L12.4 0.6 L7.8 8.8" fill="none" stroke="#222" stroke-width="1.3" stroke-linejoin="round"/><path d="M4.6 7.4 L5.6 12 L6.6 8.2 Z" fill="#222"/></svg><div class="caret" style="left:26px;top:13px;border-top-color:#222;border-left-width:4px;border-right-width:4px;border-top-width:4px"></div></div>
<div class="btn" style="left:644px;top:110px;width:43px;height:30px"><svg class="abs" style="left:10px;top:8px;transform:scaleX(-1)" width="11" height="12" viewBox="0 0 11 12"><path d="M9.2 5.2 L5 9.6 Q3 11.6 1.6 10.2 Q0.2 8.8 2.2 6.8 L7.2 1.8 Q8.6 0.4 9.6 1.4 Q10.6 2.4 9.2 3.8 L4.6 8.4 Q3.8 9.2 3.2 8.6 Q2.6 8 3.4 7.2 L7.4 3.2" fill="none" stroke="#222" stroke-width="1.1"/></svg><div class="caret" style="left:23px;top:13px;border-top-color:#222;border-left-width:4px;border-right-width:4px;border-top-width:4px"></div></div>
<div class="btn" style="left:689px;top:110px;width:44px;height:30px"><svg class="abs" style="left:10px;top:8px" width="12" height="12" viewBox="0 0 12 12"><circle cx="6" cy="6" r="5.2" fill="none" stroke="#222" stroke-width="1.4"/><path d="M6 2.8 V6.4 H4" fill="none" stroke="#222" stroke-width="1.1"/></svg><div class="caret" style="left:25px;top:13px;border-top-color:#222;border-left-width:4px;border-right-width:4px;border-top-width:4px"></div></div>
<div class="btn" style="left:735px;top:110px;width:31px;height:30px"><svg class="abs" style="left:10px;top:8px" width="10" height="12" viewBox="0 0 10 12"><path d="M0 2.2 H10 M3.4 2 V0.8 H6.6 V2 M1.2 2.6 L1.8 11.3 H8.2 L8.8 2.6 M3.6 4.4 V9.6 M5 4.4 V9.6 M6.4 4.4 V9.6" fill="none" stroke="#e5534b" stroke-width="1.2"/></svg></div>
<div class="abs" style="left:781px;top:111px;width:283px;height:16px;border:1px solid #ddd;background:#fff"><div class="abs" style="left:0;top:0;width:56px;height:14px;background:#8d9fa8"></div><div class="abs" style="left:112px;top:2px;width:1px;height:10px;background:#ddd"></div><div class="abs" style="left:169px;top:2px;width:1px;height:10px;background:#ddd"></div><div class="abs" style="left:225px;top:2px;width:1px;height:10px;background:#ddd"></div></div>
<div class="abs" style="left:781px;top:129px;font-size:14px;line-height:16px;color:#777">Новый</div>
<div class="abs" style="left:833px;top:130px;font-size:11px;line-height:13px;color:#a3a3a3;font-style:italic">12 минут назад</div>
<div class="abs" style="left:1791px;top:115px;width:48px;height:20px;border-radius:10px;background:linear-gradient(180deg,#d4d4d4,#f2f2f2 50%,#e2e2e2)"></div>
<div class="abs" style="left:1815px;top:113px;width:24px;height:24px;border-radius:50%;background:#168f4e"></div>
<div class="btn" style="left:1854px;top:110px;width:35px;height:30px;border-color:#e0e0e0"><svg class="abs" style="left:10px;top:8px" width="13" height="12" viewBox="0 0 13 12"><g fill="#222"><circle cx="4.8" cy="6.2" r="3.4"/><circle cx="10.4" cy="2.6" r="1.9"/><circle cx="10.4" cy="9.6" r="1.9"/></g><circle cx="4.8" cy="6.2" r="1.3" fill="#fff"/><circle cx="10.4" cy="2.6" r="0.7" fill="#fff"/><circle cx="10.4" cy="9.6" r="0.7" fill="#fff"/><g stroke="#222" stroke-width="1.4"><path d="M4.8 1.8 V10.6 M0.4 6.2 H9.2 M1.7 3.1 L7.9 9.3 M7.9 3.1 L1.7 9.3"/></g><circle cx="4.8" cy="6.2" r="1.3" fill="#fff"/></svg></div>

<!-- MAIN INFO PANEL -->
<div class="abs" style="left:265px;top:165px;width:525px;height:495px;background:#fff;border-radius:6px;overflow:hidden;box-shadow:0 1px 0 #dcdee3"></div><div class="abs" style="left:265px;top:165px;width:525px;height:495px;border-radius:6px;overflow:hidden">
 <div class="abs" style="left:0;top:0;width:525px;height:49px;background:#f8f9fa"></div>
 <div class="abs" style="left:8px;top:14px"><svg width="19" height="15" viewBox="0 0 19 15"><g fill="#80848f"><rect x="0" y="0" width="13" height="2.2"/><rect x="0" y="4.2" width="18" height="2.2"/><rect x="0" y="8.4" width="13" height="2.2"/><rect x="0" y="12.6" width="18.6" height="2.4"/></g></svg></div>
 <div class="abs ph" style="left:36px;top:12px;line-height:20px">Основная информация</div>
 <div class="abs" style="left:502px;top:19px;width:10px;height:2.6px;background:#666"></div>
 <div class="lbl" style="left:10px;top:63px;line-height:16px">Дата документа <span style="color:#e74c3c;font-weight:normal;position:relative;top:-3px">*</span></div>
 <div class="abs" style="left:23px;top:96px"><svg width="16" height="12" viewBox="0 0 16 12"><g fill="#000"><rect x="4.1" y="0" width="2.9" height="2.8"/><rect x="8.1" y="0" width="2.9" height="2.8"/><rect x="12.1" y="0" width="2.9" height="2.8"/><rect x="0.1" y="4" width="2.9" height="2.9"/><rect x="4.1" y="4" width="2.9" height="2.9"/><rect x="8.1" y="4" width="2.9" height="2.9"/><rect x="12.1" y="4" width="2.9" height="2.9"/><rect x="0.1" y="8.2" width="2.9" height="2.8"/><rect x="4.1" y="8.2" width="2.9" height="2.8"/><rect x="8.1" y="8.2" width="2.9" height="2.8"/></g></svg></div>
 <div class="abs" style="left:48px;top:93px;font-size:14px;line-height:16px;color:#222">18:47 27 января 2026</div>
 <svg class="abs" style="left:196px;top:94px" width="16" height="16" viewBox="0 0 16 16"><circle cx="8" cy="8" r="7.1" fill="none" stroke="#444" stroke-width="1.5"/><path d="M5 5 L11 11 M11 5 L5 11" stroke="#666" stroke-width="2.2"/></svg>
 <div class="lbl" style="left:10px;top:134px;line-height:16px">Дата самовывоза</div>
 <div class="abs" style="left:23px;top:167px"><svg width="16" height="12" viewBox="0 0 16 12"><g fill="#000"><rect x="4.1" y="0" width="2.9" height="2.8"/><rect x="8.1" y="0" width="2.9" height="2.8"/><rect x="12.1" y="0" width="2.9" height="2.8"/><rect x="0.1" y="4" width="2.9" height="2.9"/><rect x="4.1" y="4" width="2.9" height="2.9"/><rect x="8.1" y="4" width="2.9" height="2.9"/><rect x="12.1" y="4" width="2.9" height="2.9"/><rect x="0.1" y="8.2" width="2.9" height="2.8"/><rect x="4.1" y="8.2" width="2.9" height="2.8"/><rect x="8.1" y="8.2" width="2.9" height="2.8"/></g></svg></div>
 <div class="abs" style="left:48px;top:164px;font-size:14px;line-height:16px;color:#222">Выбрать период</div>

 <div class="abs" style="left:10px;top:207px"><svg width="15" height="15" viewBox="0 0 15 15"><circle cx="7.25" cy="7.25" r="5.1" fill="none" stroke="#dde0e5" stroke-width="4.3"/><g fill="#f5f6f8"><rect x="5.35" y="1.4" width="3.8" height="1.5"/><rect x="5.35" y="11.6" width="3.8" height="1.5"/><rect x="1.4" y="5.35" width="1.5" height="3.8"/><rect x="11.6" y="5.35" width="1.5" height="3.8"/></g></svg></div>
 <div class="lbl" style="left:28px;top:206px;line-height:16px">Организация <span style="color:#e74c3c;font-weight:normal;position:relative;top:-3px">*</span></div>
 <div class="sel" style="left:10px;top:230px;width:505px">
  <div class="abs" style="left:10px;top:8px;width:31px;height:14px;background:#3c8dbc;border-radius:2px;color:#fff;font-size:9px;font-weight:bold;text-align:center;line-height:14px">Ю.л.</div>
  <svg class="abs" style="left:45px;top:9px" width="11" height="9" viewBox="0 0 11 9"><path d="M0.8 4.4 L3.8 7.4 L10.2 1" fill="none" stroke="#00a65a" stroke-width="2.4"/></svg>
  <div class="t" style="left:60px;top:7px;font-size:12px">ООО "Мой Бизнес 2"</div>
  <div class="abs" style="left:485px;top:0;width:1px;height:28px;background:#aaa"></div><div class="caret" style="left:490px;top:12px;border-top-color:#888;border-left-width:4px;border-right-width:4px;border-top-width:5px"></div>
 </div>

 <div class="abs" style="left:10px;top:277px"><svg width="15" height="15" viewBox="0 0 15 15"><circle cx="7.25" cy="7.25" r="5.1" fill="none" stroke="#dde0e5" stroke-width="4.3"/><g fill="#f5f6f8"><rect x="5.35" y="1.4" width="3.8" height="1.5"/><rect x="5.35" y="11.6" width="3.8" height="1.5"/><rect x="1.4" y="5.35" width="1.5" height="3.8"/><rect x="11.6" y="5.35" width="1.5" height="3.8"/></g></svg></div>
 <div class="lbl" style="left:28px;top:277px;line-height:16px">Точка продаж</div>
 <div class="sel" style="left:10px;top:300px;width:505px">
  <div class="t" style="top:7px">Основная точка продаж</div>
  <div class="abs" style="left:469px;top:10px"><svg width="9" height="9" viewBox="0 0 9 9"><path d="M1.3 1.3 L7.7 7.7 M7.7 1.3 L1.3 7.7" stroke="#8c8c8c" stroke-width="1.8"/></svg></div>
  <div class="abs" style="left:485px;top:0;width:1px;height:28px;background:#aaa"></div><div class="caret" style="left:490px;top:12px;border-top-color:#888;border-left-width:4px;border-right-width:4px;border-top-width:5px"></div>
 </div>

 <div class="abs" style="left:10px;top:347px"><svg width="15" height="15" viewBox="0 0 15 15"><circle cx="7.25" cy="7.25" r="5.1" fill="none" stroke="#dde0e5" stroke-width="4.3"/><g fill="#f5f6f8"><rect x="5.35" y="1.4" width="3.8" height="1.5"/><rect x="5.35" y="11.6" width="3.8" height="1.5"/><rect x="1.4" y="5.35" width="1.5" height="3.8"/><rect x="11.6" y="5.35" width="1.5" height="3.8"/></g></svg></div>
 <div class="lbl" style="left:28px;top:347px;line-height:16px">Касса</div>
 <div class="sel" style="left:10px;top:370px;width:472px;border-radius:3px 0 0 3px">
  <div class="t" style="top:7px">Основная касса</div>
  <div class="abs" style="left:437px;top:10px"><svg width="9" height="9" viewBox="0 0 9 9"><path d="M1.3 1.3 L7.7 7.7 M7.7 1.3 L1.3 7.7" stroke="#8c8c8c" stroke-width="1.8"/></svg></div>
  <div class="abs" style="left:452px;top:0;width:1px;height:28px;background:#aaa"></div><div class="caret" style="left:457px;top:12px;border-top-color:#888;border-left-width:4px;border-right-width:4px;border-top-width:5px"></div>
 </div>
 <div class="abs" style="left:481px;top:370px;width:34px;height:30px;background:#f2f2f2;border:1px solid #e0e0e0;border-radius:0 3px 3px 0"><div class="abs" style="left:10px;top:10px"><svg width="13" height="9" viewBox="0 0 13 9"><path d="M0.7 4.5 Q6.5 -2.6 12.3 4.5 Q6.5 11.6 0.7 4.5 Z" fill="none" stroke="#80848f" stroke-width="1.2"/><circle cx="6.5" cy="4.5" r="2.3" fill="#80848f"/></svg></div></div>

 <div class="lbl" style="left:10px;top:417px;line-height:16px">Контрагент</div>
 <div class="sel" style="left:10px;top:440px;width:403px;border-radius:3px 0 0 3px">
  <div class="abs" style="left:10px;top:8px;width:26px;height:14px;background:#f39c12;border-radius:2px;color:#fff;font-size:9px;font-weight:bold;text-align:center;line-height:14px">ЮЛ</div>
  <div class="t" style="left:40px;top:7px">ООО "Покупатель"</div>
  <div class="abs" style="left:369px;top:10px"><svg width="9" height="9" viewBox="0 0 9 9"><path d="M1.3 1.3 L7.7 7.7 M7.7 1.3 L1.3 7.7" stroke="#8c8c8c" stroke-width="1.8"/></svg></div>
  <div class="abs" style="left:385px;top:0;width:1px;height:28px;background:#aaa"></div><div class="caret" style="left:390px;top:12px;border-top-color:#888;border-left-width:4px;border-right-width:4px;border-top-width:5px"></div>
 </div>
 <div class="abs" style="left:412px;top:440px;width:35px;height:30px;background:#f2f2f2;border:1px solid #e0e0e0"><div class="abs" style="left:11px;top:10px"><svg width="13" height="9" viewBox="0 0 13 9"><path d="M0.7 4.5 Q6.5 -2.6 12.3 4.5 Q6.5 11.6 0.7 4.5 Z" fill="none" stroke="#80848f" stroke-width="1.2"/><circle cx="6.5" cy="4.5" r="2.3" fill="#80848f"/></svg></div></div>
 <div class="abs" style="left:448px;top:440px;width:34px;height:30px;background:#f2f2f2;border:1px solid #e0e0e0"><div class="abs" style="left:10px;top:8px"><svg width="12" height="11" viewBox="0 0 13 12"><path d="M7 2.2 H1.8 Q0.7 2.2 0.7 3.3 V10.2 Q0.7 11.3 1.8 11.3 H8.6 Q9.7 11.3 9.7 10.2 V7" fill="none" stroke="#8a8f9a" stroke-width="1.2"/><path d="M4.4 8.6 L4.8 6.6 L10.4 1 L12.2 2.8 L6.6 8.4 Z" fill="none" stroke="#8a8f9a" stroke-width="1.1"/></svg></div></div>
 <div class="abs" style="left:483px;top:440px;width:32px;height:30px;background:#f2f2f2;border:1px solid #e0e0e0;border-radius:0 3px 3px 0"><div class="abs" style="left:10px;top:9px"><svg width="10" height="10" viewBox="0 0 10 10"><rect x="3.7" y="0" width="2.6" height="10" fill="#747884"/><rect x="0" y="3.7" width="10" height="2.6" fill="#747884"/></svg></div></div>
</div>

<!-- MIDDLE COLUMN -->
<div class="panel" style="left:820px;top:165px;width:524px;height:50px">
 <div class="abs" style="left:8px;top:13px"><svg width="16" height="19" viewBox="0 0 16 19"><path d="M0.8 0.8 H10.4 L15.2 5.6 V18.2 H0.8 Z" fill="#fff" stroke="#80848f" stroke-width="1.6"/><path d="M10.2 1 V5.8 H15" fill="none" stroke="#80848f" stroke-width="1.4"/><g fill="#80848f"><rect x="3.6" y="8" width="8.6" height="1.4"/><rect x="3.6" y="10.6" width="8.6" height="1.4"/><rect x="3.6" y="13.2" width="8.6" height="1.4"/></g></svg></div>
 <div class="abs ph" style="left:28px;top:14px;line-height:20px">Документ</div>
 <div class="abs" style="left:502px;top:16px"><svg width="10" height="10" viewBox="0 0 10 10"><rect x="3.6" y="0" width="2.8" height="10" fill="#666"/><rect x="0" y="3.6" width="10" height="2.8" fill="#666"/></svg></div>
</div>
<div class="panel" style="left:820px;top:227px;width:524px;height:48px">
 <div class="abs" style="left:8px;top:14px"><svg width="19" height="15" viewBox="0 0 19 15"><g fill="#80848f"><rect x="0" y="0" width="13" height="2.2"/><rect x="0" y="4.2" width="18" height="2.2"/><rect x="0" y="8.4" width="13" height="2.2"/><rect x="0" y="12.6" width="18.6" height="2.4"/></g></svg></div>
 <div class="abs ph" style="left:36px;top:12px;line-height:20px">Пользовательские поля</div>
 <div class="abs" style="left:473px;top:14px"><svg width="13" height="12" viewBox="0 0 13 12"><g fill="#777"><circle cx="4.8" cy="6.4" r="3.2"/><circle cx="10.6" cy="2.6" r="1.8"/><circle cx="10.6" cy="9.4" r="1.8"/></g><g stroke="#777" stroke-width="1.3"><path d="M4.8 2.2 V10.6 M0.6 6.4 H9 M1.8 3.4 L7.8 9.4 M7.8 3.4 L1.8 9.4 M10.6 0 V5.2 M8 2.6 H13.2 M10.6 6.8 V12 M8 9.4 H13.2"/></g><circle cx="4.8" cy="6.4" r="1.3" fill="#f8f9fa"/><circle cx="10.6" cy="2.6" r="0.7" fill="#f8f9fa"/><circle cx="10.6" cy="9.4" r="0.7" fill="#f8f9fa"/></svg></div>
 <div class="abs" style="left:502px;top:15px"><svg width="10" height="10" viewBox="0 0 10 10"><rect x="3.6" y="0" width="2.8" height="10" fill="#666"/><rect x="0" y="3.6" width="10" height="2.8" fill="#666"/></svg></div>
</div>
<div class="panel" style="left:820px;top:288px;width:524px;height:50px">
 <div class="abs" style="left:8px;top:15px"><svg width="13" height="15" viewBox="0 0 13 15"><circle cx="6.5" cy="3.8" r="3.6" fill="#80848f"/><path d="M0 15 V12 Q0 8 4 8 H9 Q13 8 13 12 V15 Z" fill="#80848f"/></svg></div>
 <div class="abs" style="left:8px;top:13px"></div>
 <div class="abs ph" style="left:25px;top:13px;line-height:20px">Заказчик и Получатель</div>
 <div class="abs" style="left:502px;top:16px"><svg width="10" height="10" viewBox="0 0 10 10"><rect x="3.6" y="0" width="2.8" height="10" fill="#666"/><rect x="0" y="3.6" width="10" height="2.8" fill="#666"/></svg></div>
</div>
<div class="panel" style="left:820px;top:352px;width:524px;height:51px">
 <div class="abs" style="left:8px;top:14px"><svg width="16" height="19" viewBox="0 0 16 19"><path d="M0.8 0.8 H10.4 L15.2 5.6 V18.2 H0.8 Z" fill="#fff" stroke="#80848f" stroke-width="1.6"/><path d="M10.2 1 V5.8 H15" fill="none" stroke="#80848f" stroke-width="1.4"/><g fill="#80848f"><rect x="3.6" y="8" width="8.6" height="1.4"/><rect x="3.6" y="10.6" width="8.6" height="1.4"/><rect x="3.6" y="13.2" width="8.6" height="1.4"/></g></svg></div>
 <div class="abs ph" style="left:28px;top:13px;line-height:20px">Сборка</div>
 <div class="abs" style="left:502px;top:17px"><svg width="10" height="10" viewBox="0 0 10 10"><rect x="3.6" y="0" width="2.8" height="10" fill="#666"/><rect x="0" y="3.6" width="10" height="2.8" fill="#666"/></svg></div>
</div>

<!-- RIGHT COLUMN -->
<div class="panel" style="left:1374px;top:165px;width:525px;height:49px">
 <div class="abs" style="left:9px;top:14px"><svg width="18" height="14" viewBox="0 0 18 14"><g fill="#80848f"><rect x="6.4" y="0" width="11.6" height="10.6" rx="0.6"/><path d="M0 6.4 L2.6 2.8 L5.8 2.8 L5.8 10.6 L0 10.6 Z"/><circle cx="3.6" cy="11.4" r="2.5"/><circle cx="14.2" cy="11.4" r="2.5"/></g><circle cx="3.6" cy="11.4" r="1.1" fill="#f8f9fa"/><circle cx="14.2" cy="11.4" r="1.1" fill="#f8f9fa"/><path d="M1.4 6 L3.1 3.9 L4.6 3.9 L4.6 6 Z" fill="#f8f9fa"/></svg></div>
 <div class="abs ph" style="left:36px;top:12px;line-height:20px">Доставка</div>
 <div class="abs" style="left:502px;top:16px"><svg width="10" height="10" viewBox="0 0 10 10"><rect x="3.6" y="0" width="2.8" height="10" fill="#666"/><rect x="0" y="3.6" width="10" height="2.8" fill="#666"/></svg></div>
</div>
<div class="panel" style="left:1374px;top:226px;width:525px;height:49px">
 <div class="abs" style="left:9px;top:14px"><svg width="18" height="14" viewBox="0 0 18 14"><g fill="#80848f"><rect x="6.4" y="0" width="11.6" height="10.6" rx="0.6"/><path d="M0 6.4 L2.6 2.8 L5.8 2.8 L5.8 10.6 L0 10.6 Z"/><circle cx="3.6" cy="11.4" r="2.5"/><circle cx="14.2" cy="11.4" r="2.5"/></g><circle cx="3.6" cy="11.4" r="1.1" fill="#f8f9fa"/><circle cx="14.2" cy="11.4" r="1.1" fill="#f8f9fa"/><path d="M1.4 6 L3.1 3.9 L4.6 3.9 L4.6 6 Z" fill="#f8f9fa"/></svg></div>
 <div class="abs ph" style="left:36px;top:12px;line-height:20px">Курьеру</div>
 <div class="abs" style="left:502px;top:16px"><svg width="10" height="10" viewBox="0 0 10 10"><rect x="3.6" y="0" width="2.8" height="10" fill="#666"/><rect x="0" y="3.6" width="10" height="2.8" fill="#666"/></svg></div>
</div>

<!-- TABLE PANEL -->
<div class="abs" style="left:265px;top:673px;width:1634px;height:290px;background:#fff;border-radius:6px;overflow:hidden;border-top:1px solid #dfe1e6">
 <div class="abs" style="left:0;top:0;width:1634px;height:50px;background:#f8f9fa"></div>
</div>
<div class="abs" style="left:273px;top:683px;width:88px;height:30px;background:#03a45e;border-radius:3px;color:#fff;font-size:12px">
 <svg class="abs" style="left:11px;top:9px" width="10" height="10" viewBox="0 0 10 10"><rect x="3.5" y="0" width="3" height="10" fill="#fff"/><rect x="0" y="3.5" width="10" height="3" fill="#fff"/></svg>
 <div class="abs" style="left:24px;top:8px;line-height:14px">Добавить</div>
</div>
<div class="abs" style="left:365px;top:683px;width:78px;height:30px;background:#03a45e;border-radius:3px;color:#fff;font-size:12px">
 <svg class="abs" style="left:10px;top:8px" width="12" height="12" viewBox="0 0 12 12"><path d="M4.4 0 H7.6 V4.4 H10 L6 8.4 L2 4.4 H4.4 Z" fill="#fff"/><path d="M0 7.6 H3.4 L6 10.2 L8.6 7.6 H12 V11.4 H0 Z" fill="#fff"/><rect x="9.4" y="9.2" width="1.4" height="0.9" fill="#03a45e"/></svg>
 <div class="abs" style="left:26px;top:8px;line-height:14px">Импорт</div>
</div>
<div class="sel" style="left:447px;top:683px;width:372px;height:30px">
 <svg class="abs" style="left:10px;top:9px" width="12" height="12" viewBox="0 0 12 12"><circle cx="5" cy="5" r="3.8" fill="none" stroke="#999" stroke-width="1.8"/><path d="M7.6 7.6 L11 11" stroke="#999" stroke-width="2.2"/></svg>
 <div class="t" style="left:25px;top:7px;color:#999">Наименование, артикул, артикул поставщика, штрихкод...</div>
 <div class="abs" style="left:353px;top:0;width:1px;height:28px;background:#aaa"></div><div class="caret" style="left:358px;top:12px;border-top-color:#888;border-left-width:4px;border-right-width:4px;border-top-width:5px"></div>
</div>
<div class="btn" style="left:823px;top:683px;width:91px;height:30px;border-color:#ddd">
 <svg class="abs" style="left:10px;top:9px" width="10" height="10" viewBox="0 0 10 10"><rect x="3.6" y="0" width="2.8" height="10" fill="#333"/><rect x="0" y="3.6" width="10" height="2.8" fill="#333"/></svg>
 <div class="abs" style="left:23px;top:7px;font-size:12px;line-height:14px;color:#333">Создать</div><div class="caret" style="left:72px;top:13px;border-top-color:#333;border-left-width:4px;border-right-width:4px;border-top-width:4px"></div>
</div>
<div class="abs" style="left:918px;top:691px"><svg width="15" height="15" viewBox="0 0 15 15"><circle cx="7.25" cy="7.25" r="5.1" fill="none" stroke="#dde0e5" stroke-width="4.3"/><g fill="#f3f4f6"><rect x="5.35" y="1.4" width="3.8" height="1.5"/><rect x="5.35" y="11.6" width="3.8" height="1.5"/><rect x="1.4" y="5.35" width="1.5" height="3.8"/><rect x="11.6" y="5.35" width="1.5" height="3.8"/></g></svg></div>
<div class="abs" style="left:937px;top:690px;font-size:14px;font-weight:bold;line-height:16px;color:#333">Цена</div>
<div class="sel" style="left:975px;top:683px;width:172px;height:30px">
 <div class="abs" style="left:10px;top:9px;width:10px;height:10px;border-radius:50%;background:#00a65a"></div>
 <div class="t" style="left:24px;top:7px;font-size:12px;color:#555">Базовая <span style="font-size:10px;color:#999">(включает НДС)</span></div>
 <div class="abs" style="left:137px;top:10px"><svg width="9" height="9" viewBox="0 0 9 9"><path d="M1.3 1.3 L7.7 7.7 M7.7 1.3 L1.3 7.7" stroke="#8c8c8c" stroke-width="1.8"/></svg></div>
 <div class="abs" style="left:152px;top:0;width:1px;height:28px;background:#aaa"></div><div class="caret" style="left:158px;top:12px;border-top-color:#888;border-left-width:4px;border-right-width:4px;border-top-width:5px"></div>
</div>
<div class="abs" style="left:1151px;top:691px"><svg width="15" height="15" viewBox="0 0 15 15"><circle cx="7.25" cy="7.25" r="5.1" fill="none" stroke="#dde0e5" stroke-width="4.3"/><g fill="#f3f4f6"><rect x="5.35" y="1.4" width="3.8" height="1.5"/><rect x="5.35" y="11.6" width="3.8" height="1.5"/><rect x="1.4" y="5.35" width="1.5" height="3.8"/><rect x="11.6" y="5.35" width="1.5" height="3.8"/></g></svg></div>
<div class="abs" style="left:1169px;top:690px;font-size:14px;font-weight:bold;line-height:16px;color:#333">Склад</div>
<div class="sel" style="left:1216px;top:683px;width:79px;height:30px">
 <div class="t" style="left:11px;top:7px;color:#555">Склад</div>
 <div class="abs" style="left:44px;top:10px"><svg width="9" height="9" viewBox="0 0 9 9"><path d="M1.3 1.3 L7.7 7.7 M7.7 1.3 L1.3 7.7" stroke="#8c8c8c" stroke-width="1.8"/></svg></div>
 <div class="abs" style="left:59px;top:0;width:1px;height:28px;background:#aaa"></div><div class="caret" style="left:64px;top:12px;border-top-color:#888;border-left-width:4px;border-right-width:4px;border-top-width:5px"></div>
</div>
<div class="abs" style="left:1875px;top:694px;width:10px;height:2.6px;background:#666"></div>
<div class="abs" style="left:275px;top:734px;width:1614px;height:175px;border:1px solid #efefef;background:#fff"></div>
<div class="abs" style="left:276px;top:825px;width:1612px;height:83px;background:#f9f9f9"></div>
<div class="abs" style="left:276px;top:767px;width:1612px;height:1px;background:#f0f0f0"></div>
<div class="abs" style="left:276px;top:824px;width:1612px;height:1px;background:#f0f0f0"></div>
<div class="abs" style="left:276px;top:852px;width:1612px;height:1px;background:#f0f0f0"></div>
<div class="abs" style="left:276px;top:880px;width:1612px;height:1px;background:#f0f0f0"></div>
<div class="abs" style="left:308px;top:735px;width:1px;height:173px;background:#f0f0f0"></div>
<div class="abs" style="left:336px;top:735px;width:1px;height:173px;background:#f0f0f0"></div>
<div class="abs" style="left:367px;top:735px;width:1px;height:173px;background:#f0f0f0"></div>
<div class="abs" style="left:930px;top:735px;width:1px;height:173px;background:#f0f0f0"></div>
<div class="abs" style="left:965px;top:735px;width:1px;height:173px;background:#f0f0f0"></div>
<div class="abs" style="left:1011px;top:735px;width:1px;height:173px;background:#f0f0f0"></div>
<div class="abs" style="left:1111px;top:735px;width:1px;height:173px;background:#f0f0f0"></div>
<div class="abs" style="left:1156px;top:735px;width:1px;height:173px;background:#f0f0f0"></div>
<div class="abs" style="left:1247px;top:735px;width:1px;height:173px;background:#f0f0f0"></div>
<div class="abs" style="left:1337px;top:735px;width:1px;height:173px;background:#f0f0f0"></div>
<div class="abs" style="left:1417px;top:735px;width:1px;height:173px;background:#f0f0f0"></div>
<div class="abs" style="left:1508px;top:735px;width:1px;height:173px;background:#f0f0f0"></div>
<div class="abs" style="left:1608px;top:735px;width:1px;height:173px;background:#f0f0f0"></div>
<div class="abs" style="left:1700px;top:735px;width:1px;height:173px;background:#f0f0f0"></div>
<div class="abs" style="left:1779px;top:735px;width:1px;height:173px;background:#f0f0f0"></div>
<div class="abs" style="left:1853px;top:735px;width:1px;height:173px;background:#f0f0f0"></div>
<div class="abs" style="left:936px;top:746px;font-size:12px;font-weight:bold;line-height:14px;color:#333">М</div>
<div class="abs" style="left:971px;top:746px;font-size:12px;font-weight:bold;line-height:14px;color:#333">Арт.</div>
<div class="abs" style="left:1017px;top:746px;font-size:12px;font-weight:bold;line-height:14px;color:#333">Кол-во</div>
<div class="abs" style="left:1117px;top:746px;font-size:12px;font-weight:bold;line-height:14px;color:#333">Мера</div>
<div class="abs" style="left:1162px;top:746px;font-size:12px;font-weight:bold;line-height:14px;color:#333">Цена</div>
<div class="abs" style="left:1252px;top:746px;font-size:12px;font-weight:bold;line-height:14px;color:#333">Сумма</div>
<div class="abs" style="left:1343px;top:746px;font-size:12px;font-weight:bold;line-height:14px;color:#333">Скидка</div>
<div class="abs" style="left:1423px;top:746px;font-size:12px;font-weight:bold;line-height:14px;color:#333">Итого</div>
<div class="abs" style="left:1514px;top:746px;font-size:12px;font-weight:bold;line-height:14px;color:#333">Налог</div>
<div class="abs" style="left:1613px;top:746px;font-size:12px;font-weight:bold;line-height:14px;color:#333">Остатки</div>
<div class="abs" style="left:1706px;top:746px;font-size:12px;font-weight:bold;line-height:14px;color:#333">Вес, кг</div>
<div class="abs" style="left:1785px;top:746px;font-size:12px;font-weight:bold;line-height:14px;color:#333">Место</div>
<div class="abs" style="left:373px;top:746px;font-size:12px;font-weight:bold;line-height:14px;color:#333">Наименование</div>
<div class="abs" style="left:281px;top:740px;width:22px;height:22px;background:#f4f4f4;border:1px solid #ddd;border-radius:3px"><svg class="abs" style="left:5px;top:5px" width="11" height="11" viewBox="0 0 11 11"><g fill="#888"><circle cx="5.5" cy="5.5" r="3.6"/></g><g stroke="#888" stroke-width="1.8"><path d="M5.5 0.4 V10.6 M0.4 5.5 H10.6 M1.9 1.9 L9.1 9.1 M9.1 1.9 L1.9 9.1"/></g><circle cx="5.5" cy="5.5" r="1.5" fill="#f4f4f4"/></svg></div>
<div class="abs" style="left:314px;top:740px;width:17px;height:17px;background:#fff;border:1px solid #c3cad5;border-radius:3px"></div>
<svg class="abs" style="left:345px;top:747px" width="14" height="11" viewBox="0 0 14 11"><rect x="0.6" y="0.6" width="12.8" height="9.8" fill="none" stroke="#333" stroke-width="1.2"/><circle cx="4" cy="3.6" r="1.4" fill="#333"/><path d="M1.6 9.4 L5.4 6.2 L7 7.6 L10 4 L12.4 6.4 V9.4 Z" fill="#333"/></svg>
<div class="abs" style="left:1860px;top:740px;width:20px;height:21px;background:#e2e2e2;border-radius:3px"><svg class="abs" style="left:6px;top:5px" width="9" height="11" viewBox="0 0 9 11"><path d="M0 2 H9 M3 1.8 V0.6 H6 V1.8 M1 2.4 L1.5 10.4 H7.5 L8 2.4 M3.2 4 V9 M4.5 4 V9 M5.8 4 V9" fill="none" stroke="#aaa" stroke-width="1.1"/></svg></div>
<div class="abs" style="left:282px;top:774px;font-size:12px;line-height:14px;color:#333">1</div>
<svg class="abs" style="left:345px;top:777px" width="15" height="7" viewBox="0 0 15 7"><path d="M0.4 3.4 L5.2 0.6 L14.6 2.6 L10.2 6.4 Z" fill="#d9902a"/><path d="M0.4 3.4 L10.2 5 L14.6 2.6 L10.2 6.4 Z" fill="#8a5a1c"/></svg>
<div class="abs" style="left:373px;top:775px;width:17px;height:14px;background:#ececec;border-radius:2px;font-size:10px;font-weight:bold;line-height:14px;text-align:center;color:#111">т</div>
<div class="abs" style="left:393px;top:774px;font-size:12px;line-height:14px;color:#3c8dbc">Запеченный сет</div>
<svg class="abs" style="left:909px;top:807px" width="17" height="11" viewBox="0 0 17 11"><rect x="0" y="0" width="17" height="11" rx="1.5" fill="#777"/><rect x="0" y="2.4" width="17" height="2.2" fill="#fff"/><rect x="2" y="7.4" width="2.6" height="1" fill="#fff"/><rect x="5.4" y="7.4" width="2.6" height="1" fill="#fff"/></svg>
<div class="abs" style="left:936px;top:771px;width:24px;height:20px;background:#eee;border-radius:3px;font-size:12px;font-weight:bold;line-height:20px;text-align:center;color:#aaa">М</div>
<div class="abs" style="left:971px;top:773px;width:35px;height:18px;background:#e6e6e6;border-radius:3px;font-size:12px;font-weight:bold;line-height:18px;text-align:center;color:#333">Т86</div>
<div class="abs" style="left:1017px;top:773px;width:89px;height:22px;border:1px solid #ddd;border-radius:3px;background:#f4f4f4"></div>
<div class="abs" style="left:1017px;top:773px;width:23px;height:22px;background:#e0e0e0;border-radius:3px 0 0 3px"></div>
<div class="abs" style="left:1023px;top:783px;width:11px;height:2px;background:#777"></div>
<div class="abs" style="left:1040px;top:773px;width:44px;height:22px;background:#fff;border:1px solid #ccc"><div class="abs" style="left:7px;top:4px;font-size:12px;line-height:14px;color:#555">1</div></div>
<svg class="abs" style="left:1089px;top:778px" width="11" height="11" viewBox="0 0 11 11"><rect x="4" y="0" width="3" height="11" fill="#333"/><rect x="0" y="4" width="11" height="3" fill="#333"/></svg>
<div class="abs" style="left:1117px;top:774px;font-size:12px;line-height:14px;color:#333">компл</div>
<div class="abs" style="left:1162px;top:774px;font-size:12px;line-height:14px;color:#3c8dbc;border-bottom:1px dashed #9a9a9a">949,00 <svg class="rub" viewBox="0 0 600 716"><path d="M145 716 V45 M95 45 H357 A157.5 157.5 0 0 1 357 360 H0 M0 500 H450"/></svg></div>
<div class="abs" style="left:1252px;top:774px;font-size:12px;line-height:14px;color:#3c8dbc;border-bottom:1px dashed #9a9a9a">949,00 <svg class="rub" viewBox="0 0 600 716"><path d="M145 716 V45 M95 45 H357 A157.5 157.5 0 0 1 357 360 H0 M0 500 H450"/></svg></div>
<div class="abs" style="left:1343px;top:774px;font-size:12px;line-height:14px;color:#333">5 %</div>
<div class="abs" style="left:1423px;top:774px;font-size:12px;font-weight:bold;line-height:14px;color:#333">901,55 <svg class="rub rb" viewBox="0 0 600 716"><path d="M145 716 V45 M95 45 H357 A157.5 157.5 0 0 1 357 360 H0 M0 500 H450"/></svg></div>
<div class="abs" style="left:1514px;top:773px;width:89px;height:30px;border:1px solid #c8c8c8;border-radius:3px;background:#fff"><div class="abs" style="left:14px;top:7px;font-size:12px;line-height:14px;color:#555">0 %</div><svg class="abs" style="left:74px;top:11px" width="10" height="7" viewBox="0 0 10 7"><path d="M1 1 L5 5 L9 1" fill="none" stroke="#333" stroke-width="1.8"/></svg></div>
<div class="abs" style="left:1614px;top:774px;font-size:12px;font-weight:bold;line-height:14px;color:#00a65a">12</div>
<div class="abs" style="left:1706px;top:774px;font-size:12px;line-height:14px;color:#333">0.95</div>
<div class="abs" style="left:1785px;top:774px;font-size:12px;line-height:14px;color:#333">48</div>
<div class="abs" style="left:373px;top:831px;font-size:12px;line-height:14px;color:#333">Итого товары:</div>
<div class="abs" style="left:1252px;top:831px;font-size:12px;line-height:14px;color:#333">949,00 <svg class="rub" viewBox="0 0 600 716"><path d="M145 716 V45 M95 45 H357 A157.5 157.5 0 0 1 357 360 H0 M0 500 H450"/></svg></div>
<div class="abs" style="left:1343px;top:831px;font-size:12px;line-height:14px;color:#333">47,45 <svg class="rub" viewBox="0 0 600 716"><path d="M145 716 V45 M95 45 H357 A157.5 157.5 0 0 1 357 360 H0 M0 500 H450"/></svg></div>
<div class="abs" style="left:1423px;top:831px;font-size:12px;line-height:14px;color:#333">901,55 <svg class="rub" viewBox="0 0 600 716"><path d="M145 716 V45 M95 45 H357 A157.5 157.5 0 0 1 357 360 H0 M0 500 H450"/></svg></div>
<div class="abs" style="left:1514px;top:831px;font-size:12px;line-height:14px;color:#333">0,00 <svg class="rub" viewBox="0 0 600 716"><path d="M145 716 V45 M95 45 H357 A157.5 157.5 0 0 1 357 360 H0 M0 500 H450"/></svg></div>
<div class="abs" style="left:1706px;top:831px;font-size:12px;line-height:14px;color:#333">0.95</div>
<div class="abs" style="left:373px;top:859px;font-size:12px;line-height:14px;color:#333">Итого услуги:</div>
<div class="abs" style="left:1343px;top:859px;font-size:12px;line-height:14px;color:#333">0,00 <svg class="rub" viewBox="0 0 600 716"><path d="M145 716 V45 M95 45 H357 A157.5 157.5 0 0 1 357 360 H0 M0 500 H450"/></svg></div>
<div class="abs" style="left:1514px;top:859px;font-size:12px;line-height:14px;color:#333">0,00 <svg class="rub" viewBox="0 0 600 716"><path d="M145 716 V45 M95 45 H357 A157.5 157.5 0 0 1 357 360 H0 M0 500 H450"/></svg></div>
<div class="abs" style="left:373px;top:887px;font-size:12px;line-height:14px;color:#333;font-weight:bold">Итого, всего:</div>
<div class="abs" style="left:1252px;top:887px;font-size:12px;line-height:14px;color:#333;font-weight:bold">949,00 <svg class="rub rb" viewBox="0 0 600 716"><path d="M145 716 V45 M95 45 H357 A157.5 157.5 0 0 1 357 360 H0 M0 500 H450"/></svg></div>
<div class="abs" style="left:1343px;top:887px;font-size:12px;line-height:14px;color:#333;font-weight:bold">47,45 <svg class="rub rb" viewBox="0 0 600 716"><path d="M145 716 V45 M95 45 H357 A157.5 157.5 0 0 1 357 360 H0 M0 500 H450"/></svg></div>
<div class="abs" style="left:1423px;top:887px;font-size:12px;line-height:14px;color:#333;font-weight:bold">901,55 <svg class="rub rb" viewBox="0 0 600 716"><path d="M145 716 V45 M95 45 H357 A157.5 157.5 0 0 1 357 360 H0 M0 500 H450"/></svg></div>
<div class="abs" style="left:1514px;top:887px;font-size:12px;line-height:14px;color:#333;font-weight:bold">0,00 <svg class="rub rb" viewBox="0 0 600 716"><path d="M145 716 V45 M95 45 H357 A157.5 157.5 0 0 1 357 360 H0 M0 500 H450"/></svg></div>
<div class="abs" style="left:1706px;top:887px;font-size:12px;line-height:14px;color:#333;font-weight:bold">0.95</div>
<div class="abs" style="left:275px;top:933px;width:134px;height:30px;background:#f4f4f4;border:1px solid #ddd;border-radius:3px"><svg class="abs" style="left:10px;top:9px" width="10" height="10" viewBox="0 0 10 10"><rect x="3.6" y="0" width="2.8" height="10" fill="#333"/><rect x="0" y="3.6" width="10" height="2.8" fill="#333"/></svg><div class="abs" style="left:23px;top:7px;font-size:12px;line-height:14px;color:#333">Дисконтная карта</div></div>
<div class="abs" style="left:413px;top:933px;width:121px;height:30px;background:#f4f4f4;border:1px solid #ddd;border-radius:3px"><svg class="abs" style="left:10px;top:9px" width="10" height="10" viewBox="0 0 10 10"><rect x="3.6" y="0" width="2.8" height="10" fill="#333"/><rect x="0" y="3.6" width="10" height="2.8" fill="#333"/></svg><div class="abs" style="left:23px;top:7px;font-size:12px;line-height:14px;color:#333">Бонусная карта</div></div>
<div class="abs" style="left:538px;top:933px;width:137px;height:30px;background:#f4f4f4;border:1px solid #ddd;border-radius:3px"><svg class="abs" style="left:10px;top:9px" width="10" height="10" viewBox="0 0 10 10"><rect x="3.6" y="0" width="2.8" height="10" fill="#333"/><rect x="0" y="3.6" width="10" height="2.8" fill="#333"/></svg><div class="abs" style="left:23px;top:7px;font-size:12px;line-height:14px;color:#333">Подарочная карта</div></div>

</body></html>
